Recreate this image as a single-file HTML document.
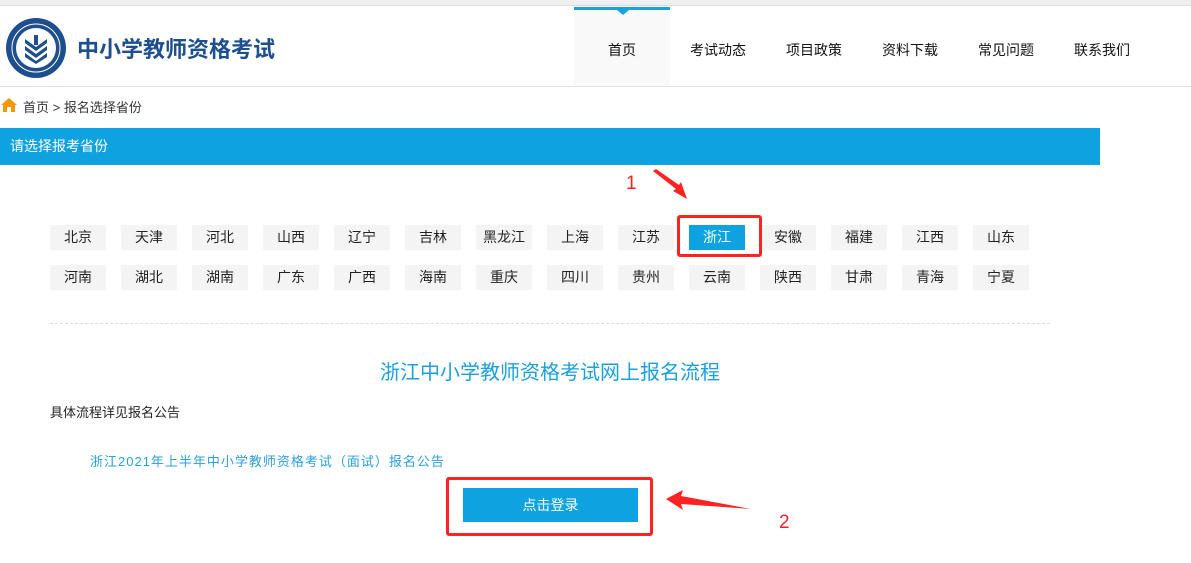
<!DOCTYPE html>
<html><head><meta charset="utf-8"><style>
*{margin:0;padding:0;box-sizing:border-box}
body{width:1191px;height:563px;position:relative;background:#fff;font-family:"Liberation Sans","Noto Sans CJK SC",sans-serif;font-size:13px;color:#222;overflow:hidden}
.a{position:absolute}
.btn{position:absolute;width:56px;height:25px;background:#f4f4f4;text-align:center;line-height:25px;font-size:14px;color:#222}
.nav{position:absolute;top:40px;font-size:14px;color:#111}
</style></head><body>
<div class="a" style="left:0;top:0;width:1191px;height:6px;background:#f0f0f0;border-bottom:1px solid #ddd"></div>
<div class="a" style="left:0;top:86px;width:1191px;height:1px;background:#e2e2e2"></div>
<svg class="a" style="left:5px;top:17px" width="62" height="62" viewBox="0 0 62 62">
<circle cx="31" cy="31" r="30" fill="#1d4f8e"/><circle cx="31" cy="31" r="24" fill="none" stroke="#fff" stroke-width="1"/>
<circle cx="31" cy="31" r="20" fill="#fff"/>
<path d="M20 22 L31 30 L42 22 L42 26 L31 34 L20 26Z M20 29 L31 37 L42 29 L42 33 L31 41 L20 33Z M20 36 L31 44 L42 36 L42 40 L31 47 L20 40Z" fill="#1d4f8e"/>
<rect x="29" y="18" width="4" height="10" fill="#1d4f8e"/>
</svg>
<div class="a" style="left:77px;top:32px;font-size:22px;color:#1d4f8e;font-weight:bold">中小学教师资格考试</div>
<div class="a" style="left:574px;top:7px;width:96px;height:79px;background:#f9f9f9;border-top:3px solid #1aa0dc"></div>
<div class="a" style="left:617px;top:10px;width:0;height:0;border-left:6px solid transparent;border-right:6px solid transparent;border-top:5px solid #1aa0dc"></div>
<div class="nav" style="left:608px">首页</div>
<div class="nav" style="left:690px">考试动态</div>
<div class="nav" style="left:786px">项目政策</div>
<div class="nav" style="left:882px">资料下载</div>
<div class="nav" style="left:978px">常见问题</div>
<div class="nav" style="left:1074px">联系我们</div>
<svg class="a" style="left:1px;top:98px" width="16" height="14" viewBox="0 0 16 14"><path d="M8 0 L16 7 L14 7 L14 14 L10 14 L10 9 L6 9 L6 14 L2 14 L2 7 L0 7Z" fill="#f39800"/></svg>
<div class="a" style="left:23px;top:97px;font-size:13px;color:#333">首页 &gt; 报名选择省份</div>
<div class="a" style="left:0;top:128px;width:1100px;height:37px;background:#0ea3e0;color:#fff;font-size:14px;line-height:37px;padding-left:10px">请选择报考省份</div>
<div class="btn" style="left:50px;top:225px">北京</div>
<div class="btn" style="left:121px;top:225px">天津</div>
<div class="btn" style="left:192px;top:225px">河北</div>
<div class="btn" style="left:263px;top:225px">山西</div>
<div class="btn" style="left:334px;top:225px">辽宁</div>
<div class="btn" style="left:405px;top:225px">吉林</div>
<div class="btn" style="left:476px;top:225px">黑龙江</div>
<div class="btn" style="left:547px;top:225px">上海</div>
<div class="btn" style="left:618px;top:225px">江苏</div>
<div class="btn" style="left:689px;top:225px;background:#0ea3e0;color:#fff">浙江</div>
<div class="btn" style="left:760px;top:225px">安徽</div>
<div class="btn" style="left:831px;top:225px">福建</div>
<div class="btn" style="left:902px;top:225px">江西</div>
<div class="btn" style="left:973px;top:225px">山东</div>
<div class="btn" style="left:50px;top:265px">河南</div>
<div class="btn" style="left:121px;top:265px">湖北</div>
<div class="btn" style="left:192px;top:265px">湖南</div>
<div class="btn" style="left:263px;top:265px">广东</div>
<div class="btn" style="left:334px;top:265px">广西</div>
<div class="btn" style="left:405px;top:265px">海南</div>
<div class="btn" style="left:476px;top:265px">重庆</div>
<div class="btn" style="left:547px;top:265px">四川</div>
<div class="btn" style="left:618px;top:265px">贵州</div>
<div class="btn" style="left:689px;top:265px">云南</div>
<div class="btn" style="left:760px;top:265px">陕西</div>
<div class="btn" style="left:831px;top:265px">甘肃</div>
<div class="btn" style="left:902px;top:265px">青海</div>
<div class="btn" style="left:973px;top:265px">宁夏</div>
<div class="a" style="left:677px;top:215px;width:85px;height:42px;border:3px solid #f22;border-radius:3px"></div>
<div class="a" style="left:626px;top:173px;font-size:19px;color:#f22">1</div>
<svg class="a" style="left:650px;top:168px" width="40" height="34"><path d="M3 3 L6 1 L29 17 L31 14 L37 31 L23 23 L26 21Z" fill="#f22"/></svg>
<div class="a" style="left:50px;top:323px;width:1000px;border-top:1px dashed #ddd"></div>
<div class="a" style="left:0;top:356px;width:1100px;text-align:center;font-size:20px;color:#1aa0dc">浙江中小学教师资格考试网上报名流程</div>
<div class="a" style="left:50px;top:402px;font-size:13px;color:#222">具体流程详见报名公告</div>
<div class="a" style="left:90px;top:451px;font-size:13px;color:#2aa0dc;letter-spacing:1px">浙江2021年上半年中小学教师资格考试（面试）报名公告</div>
<div class="a" style="left:446px;top:477px;width:207px;height:59px;border:3px solid #f22;border-radius:3px"></div>
<div class="a" style="left:463px;top:488px;width:175px;height:34px;background:#0ea3e0;color:#fff;text-align:center;line-height:34px;font-size:14px">点击登录</div>
<svg class="a" style="left:663px;top:489px" width="90" height="24"><path d="M3 10 L20 1 L18 7 L88 20 L18 15 L20 21Z" fill="#f22"/></svg>
<div class="a" style="left:779px;top:512px;font-size:19px;color:#f22">2</div>
</body></html>
